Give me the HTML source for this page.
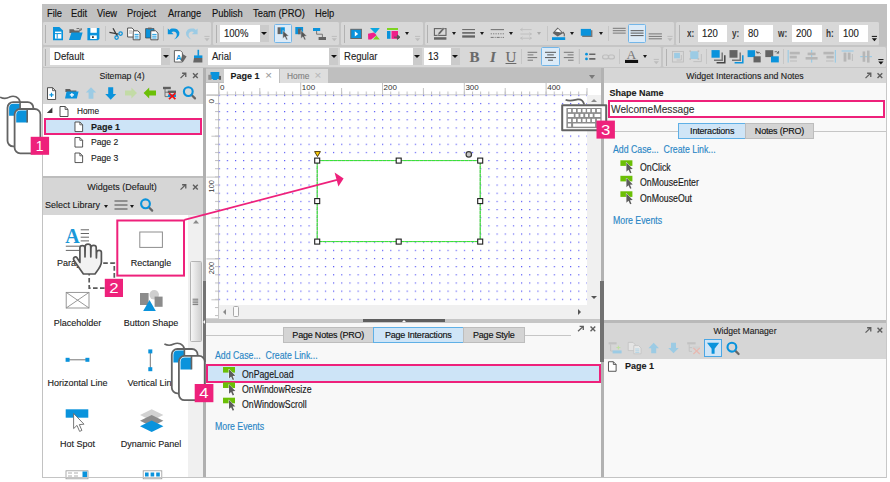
<!DOCTYPE html>
<html>
<head>
<meta charset="utf-8">
<title>Axure RP - Page 1</title>
<style>
html,body{margin:0;padding:0}
body{width:890px;height:482px;position:relative;overflow:hidden;background:#fff;font-family:"Liberation Sans",sans-serif;color:#1a1a1a}
.a{position:absolute}
.t{position:absolute;white-space:nowrap;line-height:1;font-size:9px;margin-top:0.5px;-webkit-text-stroke:0.12px}
.t.e{font-size:10px;margin-top:0.7px;transform:scaleX(0.875);transform-origin:0 50%;-webkit-text-stroke:0.15px}
.t[style*="text-align:center"]{transform-origin:50% 50%}
.m{position:absolute;white-space:nowrap;line-height:1;font-size:11px;top:7.6px;color:#111;transform:scaleX(0.85);transform-origin:0 50%;-webkit-text-stroke:0.15px}
.in{position:absolute;background:#fff;height:17px}
.in span{position:absolute;left:4.2px;top:3.4px;font-size:10.6px;line-height:1;color:#222;transform:scaleX(0.9);transform-origin:0 50%;-webkit-text-stroke:0.12px}
.dd{position:absolute;background:#cbcbcb;height:17px;width:9px}
.dd:after{content:"";position:absolute;left:1.5px;top:7px;border:3px solid transparent;border-top:3.4px solid #111;border-bottom:0}
.ar{position:absolute;width:0;height:0;border:2.8px solid transparent;border-top:3.2px solid #1a1a1a;border-bottom:0}
.sep{position:absolute;width:1px;background:#c6c6c6}
.grip{position:absolute;width:1.2px;height:18px;background:#b2b2b2}
.lnk{color:#2a86c6}
.hd{position:absolute;font-size:9px;margin-top:1px;-webkit-text-stroke:0.12px;line-height:1;color:#222;white-space:nowrap;text-align:center}
.tab{position:absolute;height:13.5px;top:327.4px;background:#d4d4d4;border:1px solid #bdbdbd;box-sizing:content-box;font-size:9px;letter-spacing:-0.2px;line-height:14px;text-align:center;color:#111;-webkit-text-stroke:0.15px;white-space:nowrap}
.tab.sel{background:#cfe5f7;border-color:#5fb0e6}
.badge{position:absolute;background:#e9257d;color:#fff;font-weight:bold;text-align:center}
svg{position:absolute;left:0;top:0;overflow:visible}
</style>
</head>
<body>
<svg width="0" height="0" style="position:absolute">
<defs>
<symbol id="pg" viewBox="0 0 9 11" overflow="visible"><path d="M0.5 0.5 H5.6 L8.5 3.4 V10.5 H0.5 Z" fill="#fff" stroke="#3c3c3c" stroke-width="0.9"/><path d="M5.6 0.5 V3.4 H8.5" fill="none" stroke="#3c3c3c" stroke-width="0.8"/></symbol>
<symbol id="ev" viewBox="0 0 13 13" overflow="visible"><rect x="0" y="0" width="12" height="5.6" fill="#6bbf06"/><path d="M6 2.2 L6 11.4 L8.1 9.5 L9.7 13 L11.1 12.4 L9.6 8.9 L12.4 8.7 Z" fill="#5c5c5c" stroke="#fff" stroke-width="0.8" paint-order="stroke"/></symbol>
<symbol id="pin" viewBox="0 0 8 8" overflow="visible"><path d="M0.6 7 L6.2 1.6 M2.4 1.4 H6.6 V5.6" fill="none" stroke="#5e5e5e" stroke-width="1.5"/></symbol>
<symbol id="cx" viewBox="0 0 8 8" overflow="visible"><path d="M0.6 1.4 L6 6.8 M6 1.4 L0.6 6.8" fill="none" stroke="#5e5e5e" stroke-width="1.6"/></symbol>
<symbol id="mag" viewBox="0 0 14 13" overflow="visible"><path d="M9 8.8 L12.4 12.2" stroke="#666" stroke-width="2.2" stroke-linecap="round"/><circle cx="5.7" cy="5.4" r="4.4" fill="none" stroke="#0a93dc" stroke-width="2.1"/></symbol>
</defs></svg>
<!-- window frame -->
<div class="a" id="win" style="left:42px;top:4px;width:844.5px;height:474px;background:#d6d6d6"></div>
<!-- menu bar -->
<div class="a" style="left:42px;top:4px;width:844.5px;height:18px;background:#c1c1c1"></div>
<div class="m" style="left:47px">File</div>
<div class="m" style="left:71px">Edit</div>
<div class="m" style="left:97px">View</div>
<div class="m" style="left:127px">Project</div>
<div class="m" style="left:167.5px">Arrange</div>
<div class="m" style="left:212px">Publish</div>
<div class="m" style="left:253px">Team (PRO)</div>
<div class="m" style="left:315px">Help</div>
<!-- toolbar row 1 -->

<div class="a" style="left:42px;top:21.7px;width:844.5px;height:46.6px;background:#c5c5c5"></div>
<div class="a" style="left:878.6px;top:21.7px;width:8px;height:24px;background:#c1c1c1"></div>
<div class="a" style="left:42.6px;top:21.8px;width:168.8px;height:23.2px;background:#d8d8d8;border-radius:1.5px"></div><div class="a" style="left:213.2px;top:21.8px;width:126.1px;height:23.2px;background:#d8d8d8;border-radius:1.5px"></div><div class="a" style="left:341.1px;top:21.8px;width:81.8px;height:23.2px;background:#d8d8d8;border-radius:1.5px"></div><div class="a" style="left:424.7px;top:21.8px;width:249.8px;height:23.2px;background:#d8d8d8;border-radius:1.5px"></div><div class="a" style="left:676.3px;top:21.8px;width:202.3px;height:23.2px;background:#d8d8d8;border-radius:1.5px"></div>
<div class="a" style="left:42.6px;top:46.6px;width:618.9px;height:20.9px;background:#d8d8d8;border-radius:1.5px"></div><div class="a" style="left:663.3px;top:46.6px;width:222.5px;height:20.9px;background:#d8d8d8;border-radius:1.5px"></div>
<div class="grip" style="left:45.3px;top:25px"></div><div class="grip" style="left:215.8px;top:25px"></div><div class="grip" style="left:343.6px;top:25px"></div><div class="grip" style="left:427.3px;top:25px"></div><div class="grip" style="left:678.9px;top:25px"></div><div class="grip" style="left:45.3px;top:48.6px;height:17px"></div><div class="grip" style="left:665.6px;top:48.6px;height:17px"></div>
<!-- TOOLBAR1 -->

<div class="sep" style="left:104.5px;top:26px;height:15px"></div>
<div class="sep" style="left:163px;top:26px;height:15px"></div>

<div class="in" style="left:220px;top:25px;width:39.5px"><span>100%</span></div>
<div class="dd" style="left:259.5px;top:25px"></div>
<div class="a" style="left:274px;top:24.3px;width:16.4px;height:16.4px;background:#dcebf8;border:1px solid #74b6e8;border-radius:1.5px;box-sizing:content-box"></div>

<div class="ar" style="left:404.5px;top:32px"></div>

<div class="ar" style="left:451.5px;top:32px"></div>
<div class="ar" style="left:480px;top:32px"></div>
<div class="ar" style="left:509px;top:32px"></div>
<div class="ar" style="left:537px;top:32px;border-top-color:#aaa"></div>
<div class="sep" style="left:546.5px;top:26px;height:15px"></div>
<div class="ar" style="left:570px;top:32px"></div>
<div class="ar" style="left:598.5px;top:32px"></div>
<div class="sep" style="left:607.5px;top:26px;height:15px"></div>
<div class="a" style="left:628.2px;top:24.3px;width:15.8px;height:16.4px;background:#dcebf8;border:1px solid #74b6e8;border-radius:1.5px;box-sizing:content-box"></div>

<div class="t" style="left:686.5px;top:28.6px;font-size:10px;font-weight:bold;color:#3a3a3a;transform:scaleX(0.82);transform-origin:0 50%;-webkit-text-stroke:0">x:</div>
<div class="in" style="left:697.6px;top:25px;width:29.7px"><span>120</span></div>
<div class="t" style="left:732px;top:28.6px;font-size:10px;font-weight:bold;color:#3a3a3a;transform:scaleX(0.82);transform-origin:0 50%;-webkit-text-stroke:0">y:</div>
<div class="in" style="left:743.6px;top:25px;width:29.6px"><span>80</span></div>
<div class="t" style="left:777.5px;top:28.6px;font-size:10px;font-weight:bold;color:#3a3a3a;transform:scaleX(0.82);transform-origin:0 50%;-webkit-text-stroke:0">w:</div>
<div class="in" style="left:792px;top:25px;width:29.5px"><span>200</span></div>
<div class="t" style="left:826px;top:28.6px;font-size:10px;font-weight:bold;color:#3a3a3a;transform:scaleX(0.82);transform-origin:0 50%;-webkit-text-stroke:0">h:</div>
<div class="in" style="left:838.6px;top:25px;width:29.5px"><span>100</span></div>
<svg width="890" height="482" viewBox="0 0 890 482">
<!-- new/open/save -->
<path d="M53 27 H59.4 L63 30.6 V40.2 H53 Z" fill="#0a93dc"/><path d="M55 31.6 H61.4 V38.6 H55 Z" fill="#fff"/><path d="M55 33.6 H61.4 M57.2 33.6 V38.6" stroke="#0a93dc" stroke-width="1"/>
<path d="M69.4 29.2 H73.6 L74.6 30.6 H79.6 V33 H69.4 Z" fill="#636363"/><path d="M76.5 28.6 Q79.5 27.6 80.6 30.2 M79.2 30.6 L81.4 30 L81 28" stroke="#636363" stroke-width="0.9" fill="none"/><path d="M71.4 32.6 H82.6 L80.4 40 H69 Z" fill="#0a93dc"/>
<path d="M87.4 28 H99.4 V39 L98 40.2 H87.4 Z" fill="#0a93dc"/><rect x="90.4" y="28" width="6.4" height="4.8" fill="#fff"/><rect x="90.2" y="35.4" width="6.6" height="3.6" fill="#fff"/><rect x="92" y="36.2" width="1.8" height="1.8" fill="#333"/>
<!-- cut/copy/paste -->
<path d="M109.4 32.4 L118.6 34.2 M113 28.2 L117.4 36.2" stroke="#3c3c3c" stroke-width="1.3" fill="none"/><circle cx="116.6" cy="37.6" r="1.7" fill="none" stroke="#0a93dc" stroke-width="1.2"/><circle cx="120.6" cy="33.6" r="1.7" fill="none" stroke="#0a93dc" stroke-width="1.2"/>
<path d="M127.6 28 H132 L134 30 V37 H127.6 Z" fill="#fff" stroke="#444" stroke-width="0.9"/><path d="M129 31 H132 M129 33 H132" stroke="#888" stroke-width="0.7"/>
<path d="M133.2 30.8 H137.8 L140 33 V39.8 H133.2 Z" fill="#fff" stroke="#444" stroke-width="0.9"/><path d="M134.6 34.4 H138.6 M134.6 36.2 H138.6 M134.6 38 H138.6" stroke="#0a93dc" stroke-width="0.9"/>
<path d="M145.6 28.6 H154 V38 H145.6 Z" fill="#0a93dc" stroke="#444" stroke-width="0.7"/><rect x="148" y="27.6" width="3.6" height="1.8" fill="#666"/>
<path d="M150.8 30.8 H155.6 L158 33.2 V39.8 H150.8 Z" fill="#fff" stroke="#444" stroke-width="0.9"/><path d="M152.2 34.4 H156.6 M152.2 36.2 H156.6 M152.2 38 H156.6" stroke="#0a93dc" stroke-width="0.9"/>
<!-- undo/redo -->
<path d="M167.8 28.4 V34.2 H173.6 L171.4 32 Q175.2 30.4 176.6 33.6 Q177.6 36.8 174 39.4 Q179.8 37.4 179.4 32.6 Q178 27.4 171.6 28.6 Q170.4 29 169.6 30 Z" fill="#0a93dc"/>
<path d="M197.6 28.4 V34.2 H191.8 L194 32 Q190.2 30.4 188.8 33.6 Q187.8 36.8 191.4 39.4 Q185.6 37.4 186 32.6 Q187.4 27.4 193.8 28.6 Q195 29 195.8 30 Z" fill="#9ccbe4"/>
<path d="M204.4 36.4 H209.6" stroke="#bdbdbd" stroke-width="1"/><path d="M204.4 38.2 H209.6 L207 41.2 Z" fill="#bdbdbd"/>
<!-- select tools -->
<rect x="277.6" y="27.3" width="3.2" height="6.8" fill="#636363"/><rect x="280.8" y="27.3" width="4" height="6.8" fill="#0a93dc"/>
<path d="M282.8 30.4 V38.6 L284.8 36.8 L286.4 40 L287.8 39.4 L286.3 36.2 L288.8 36 Z" fill="#555" stroke="#e8eef4" stroke-width="0.5"/>
<rect x="295.3" y="27" width="7.8" height="7.2" fill="#0a93dc"/><rect x="298" y="28.6" width="3.2" height="5.6" fill="#636363"/>
<path d="M300.9 30.4 V38.6 L302.9 36.8 L304.5 40 L305.9 39.4 L304.4 36.2 L306.9 36 Z" fill="#555" stroke="#d9d9d9" stroke-width="0.5"/>
<rect x="313" y="28" width="7.2" height="3" fill="#0a93dc"/><path d="M316.6 31 V34.2 H322.4 V37" stroke="#777" stroke-width="1" fill="none"/><rect x="318.6" y="37" width="7.4" height="3" fill="#636363"/>
<path d="M331.7 36.4 H336.90000000000003" stroke="#bdbdbd" stroke-width="1"/><path d="M331.7 38.2 H336.90000000000003 L334.3 41.2 Z" fill="#bdbdbd"/>
<!-- preview / publish -->
<rect x="350.8" y="29.3" width="10.6" height="9.2" fill="#0a93dc" stroke="#666" stroke-width="1"/><path d="M354.8 31.2 V36.6 L358.2 33.9 Z" fill="#fff"/>
<path d="M370 28 H379.8 L375.4 33.6 Z" fill="#0aa6e0"/><path d="M368 33.8 L374 32.6 L376.6 35.2 L371.2 39.4 H368.2 Z" fill="#f01f8a"/><path d="M376.4 35.6 L379.9 39.5 H373 Z" fill="#7ed321"/>
<rect x="387" y="28" width="11" height="2" fill="#7ed321"/><rect x="387" y="31" width="3.5" height="7.8" fill="#0a93dc"/><rect x="391.5" y="31" width="6.5" height="7.8" fill="#f01f8a"/><path d="M394 37.2 H398 M397.4 35 L400 37.2 L397.4 39.4 Z" stroke="#555" stroke-width="1" fill="#555"/>
<path d="M415.0 36.4 H420.20000000000005" stroke="#bdbdbd" stroke-width="1"/><path d="M415.0 38.2 H420.20000000000005 L417.6 41.2 Z" fill="#bdbdbd"/>
<!-- line color/width/style -->
<rect x="434.4" y="28.6" width="11.6" height="6.8" fill="none" stroke="#636363" stroke-width="1.1"/><path d="M437.4 35.4 L438.4 32.8 L443 27.4 L444.6 28.8 L440 34.2 Z" fill="#636363" stroke="#d9d9d9" stroke-width="0.5"/><rect x="434" y="37.2" width="12.4" height="2.5" fill="#636363"/>
<path d="M462.2 29.6 H475" stroke="#636363" stroke-width="1"/><path d="M462.2 32.9 H475" stroke="#636363" stroke-width="1.6"/><path d="M462.2 36.5 H475" stroke="#636363" stroke-width="2.3"/>
<path d="M490.7 29.6 H504" stroke="#777" stroke-width="1.1"/><path d="M490.7 33.8 H504" stroke="#777" stroke-width="1" stroke-dasharray="1.2 1.2"/><path d="M490.7 37.4 H504" stroke="#777" stroke-width="1" stroke-dasharray="3 1 1 1"/>
<g stroke="#bdbdbd" stroke-width="0.9" fill="none"><path d="M520.4 29.6 H531.6 M522.6 28.2 L520.6 29.6 L522.6 31 M520.4 34 H531.6 M529.4 32.6 L531.4 34 L529.4 35.4 M520.4 38.2 H531.6 M522.6 36.8 L520.6 38.2 L522.6 39.6 M529.4 36.8 L531.4 38.2 L529.4 39.6"/></g>
<!-- fill -->
<path d="M557.6 27.4 L563.4 33 L557.6 36.4 L552.6 33 Z" fill="#636363"/><path d="M555 31.6 L558 28.8 L561.6 32.4 Z" fill="#fff"/><path d="M563 32 Q565 34 564.2 36.4" stroke="#636363" stroke-width="1.1" fill="none"/><rect x="552" y="37.2" width="13.2" height="2.8" fill="#0a93dc"/>
<rect x="582.2" y="30.2" width="10.2" height="6.8" fill="#777"/><rect x="580.8" y="28.9" width="10.2" height="6.8" fill="#0a93dc"/>
<!-- valign -->
<path d="M612.8 28.3 H625.7 M612.8 30.7 H625.7 M612.8 33.1 H625.7" stroke="#777" stroke-width="1"/>
<path d="M630.6 30.7 H643.6 M630.6 33.1 H643.6 M630.6 35.6 H643.6" stroke="#555" stroke-width="1"/>
<path d="M648.7 33.9 H661.9 M648.7 36.4 H661.9 M648.7 38.8 H661.9" stroke="#777" stroke-width="1"/>
<path d="M667.4 36.4 H672.6" stroke="#bdbdbd" stroke-width="1"/><path d="M667.4 38.2 H672.6 L670 41.2 Z" fill="#bdbdbd"/>
<path d="M871.8 36.4 H877.0" stroke="#111" stroke-width="1"/><path d="M871.8 38.2 H877.0 L874.4 41.2 Z" fill="#111"/>
</svg>
<!-- TOOLBAR2 -->

<div class="in" style="left:49.7px;top:48px;width:111.5px"><span>Default</span></div>
<div class="dd" style="left:161.2px;top:48px"></div>
<div class="in" style="left:208px;top:48px;width:121px"><span>Arial</span></div>
<div class="dd" style="left:329px;top:48px"></div>
<div class="in" style="left:340px;top:48px;width:72.5px"><span>Regular</span></div>
<div class="dd" style="left:412.5px;top:48px"></div>
<div class="in" style="left:424.2px;top:48px;width:26.5px"><span>13</span></div>
<div class="dd" style="left:450.7px;top:48px"></div>
<div class="t" style="left:469.5px;top:49px;font-family:'Liberation Serif',serif;font-weight:bold;font-size:15px;color:#6a6a6a">B</div>
<div class="t" style="left:490px;top:49px;font-family:'Liberation Serif',serif;font-style:italic;font-weight:bold;font-size:15px;color:#6a6a6a">I</div>
<div class="t" style="left:505.5px;top:49px;font-family:'Liberation Serif',serif;font-size:15px;color:#6a6a6a;text-decoration:underline">U</div>
<div class="sep" style="left:521px;top:49px;height:15px"></div>
<div class="a" style="left:541.4px;top:47.2px;width:16.4px;height:16.4px;background:#dcebf8;border:1px solid #74b6e8;border-radius:1.5px;box-sizing:content-box"></div>
<div class="sep" style="left:619.4px;top:49px;height:15px"></div>
<div class="ar" style="left:643px;top:54.5px"></div>

<div class="sep" style="left:706.4px;top:49px;height:15px"></div>
<div class="sep" style="left:783px;top:49px;height:15px"></div>
<svg width="890" height="482" viewBox="0 0 890 482">
<!-- style painter icons -->
<path d="M174.4 50.6 H180.4 L182.4 52.6 V62 H174.4 Z" fill="#fff" stroke="#555" stroke-width="0.9"/><text x="176" y="60.4" font-family="Liberation Sans, sans-serif" font-size="7.5" font-weight="bold" fill="#0a93dc">A</text><path d="M182.6 54 L186.6 56.6 L183 62 L180.6 60.4 Z" fill="#666"/>
<rect x="197.5" y="49.8" width="1.6" height="6" fill="#0a93dc"/><rect x="194" y="55.4" width="8.4" height="2.6" fill="#0a93dc"/><path d="M194 58 H202.4 V62.4 H193.2 Z" fill="#666"/>
<!-- align -->
<path d="M527.6 52.3 H537.2 M527.6 54.9 H533.4 M527.6 57.6 H537.2 M527.6 60.2 H533" stroke="#777" stroke-width="1"/>
<path d="M545 52.3 H556 M547.2 54.9 H553.8 M545 57.6 H556 M548 60.2 H553" stroke="#555" stroke-width="1"/>
<path d="M563.8 52.3 H573.6 M567.6 54.9 H573.6 M563.8 57.6 H573.6 M568 60.2 H573.6" stroke="#777" stroke-width="1"/>
<path d="M579.3 49 V64" stroke="#bcbcbc" stroke-width="1"/>
<circle cx="586.5" cy="54.2" r="1.4" fill="#0a93dc"/><circle cx="586.5" cy="58.9" r="1.4" fill="#0a93dc"/><path d="M589.2 54.2 H595.4 M589.2 58.9 H595.4" stroke="#666" stroke-width="1.6"/>
<rect x="602.6" y="55" width="6" height="3.8" rx="1.9" fill="none" stroke="#bdbdbd" stroke-width="1.2"/><rect x="608.4" y="55" width="6" height="3.8" rx="1.9" fill="none" stroke="#bdbdbd" stroke-width="1.2"/>
<text x="626.6" y="58.9" font-family="Liberation Serif, serif" font-size="13.5" fill="#777">A</text><rect x="625" y="59.9" width="13.1" height="3.1" fill="#111"/>
<path d="M653.6999999999999 59.4 H658.9" stroke="#bdbdbd" stroke-width="1"/><path d="M653.6999999999999 61.2 H658.9 L656.3 64.2 Z" fill="#bdbdbd"/>
<!-- group/ungroup -->
<rect x="672.4" y="51.4" width="11" height="10.6" fill="none" stroke="#bdbdbd" stroke-width="0.9"/><rect x="674.1" y="52.9" width="5.8" height="5.4" fill="#9ccbe4"/><path d="M681.4 55 V60 H676.6" stroke="#bdbdbd" stroke-width="0.9" fill="none"/>
<rect x="690.2" y="51.2" width="8.2" height="7.8" fill="#9ccbe4"/><g fill="#bdbdbd"><rect x="689.4" y="50.4" width="1.6" height="1.6"/><rect x="697.6" y="50.4" width="1.6" height="1.6"/><rect x="689.4" y="58.2" width="1.6" height="1.6"/><rect x="697.6" y="58.2" width="1.6" height="1.6"/></g><path d="M701.4 54 V61.6 H693.4" stroke="#bdbdbd" stroke-width="0.9" fill="none"/>
<!-- order -->
<path d="M714 60.2 H722.2 V52.6" stroke="#777" stroke-width="1.5" fill="none"/><path d="M716.6 62.8 H724.8 V55.2" stroke="#444" stroke-width="1.5" fill="none"/><rect x="711.5" y="50.1" width="8.2" height="7.6" fill="#0a93dc"/>
<path d="M732 60.2 H740.2 V52.6" stroke="#777" stroke-width="1.5" fill="none"/><path d="M734.6 62.8 H742.8 V55.2" stroke="#0a93dc" stroke-width="1.5" fill="none"/><rect x="729.5" y="50.1" width="8" height="7.6" fill="#636363"/>
<rect x="747.6" y="50.2" width="7.5" height="6.9" fill="#0a93dc"/><rect x="753.5" y="56.3" width="7.2" height="6.1" fill="#636363"/><path d="M757 52.6 Q759.4 51.4 760.6 53.6 M756.8 51 V53 H758.8" stroke="#555" stroke-width="0.8" fill="none"/>
<rect x="765.3" y="50.2" width="7.9" height="6.9" fill="#636363"/><rect x="771" y="56.3" width="7.8" height="6.1" fill="#0a93dc"/><path d="M774.6 51.8 Q777 50.8 778.2 53 M778.6 51 V53.2 H776.6" stroke="#555" stroke-width="0.8" fill="none"/>
<!-- align objects (disabled) -->
<rect x="787.6" y="50" width="1.2" height="12.6" fill="#9ccbe4"/><rect x="789.8" y="51.8" width="10" height="2.6" fill="#b6b6b6"/><rect x="789.8" y="55.8" width="7" height="2.6" fill="#b6b6b6"/><path d="M790 61 H797" stroke="#b6b6b6" stroke-width="0.8"/>
<rect x="811" y="50" width="1.2" height="12.6" fill="#9ccbe4"/><rect x="807.6" y="52.6" width="8" height="2.6" fill="#b6b6b6"/><rect x="805.6" y="57" width="12" height="2.6" fill="#b6b6b6"/>
<rect x="834.8" y="50" width="1.2" height="12.6" fill="#9ccbe4"/><rect x="823.4" y="51.8" width="10.4" height="2.6" fill="#b6b6b6"/><rect x="826.4" y="55.8" width="7.4" height="2.6" fill="#b6b6b6"/><path d="M826 61 H833.6" stroke="#b6b6b6" stroke-width="0.8"/>
<rect x="841.6" y="50.4" width="12" height="1.2" fill="#9ccbe4"/><rect x="843.6" y="52.6" width="2.8" height="9" fill="#b6b6b6"/><rect x="847.8" y="52.6" width="2.8" height="7" fill="#b6b6b6"/><path d="M852.4 54 V61" stroke="#b6b6b6" stroke-width="0.8"/>
<rect x="860.2" y="56" width="11.8" height="1.2" fill="#9ccbe4"/><rect x="862.6" y="51.4" width="2.6" height="10.4" fill="#b6b6b6"/><rect x="867" y="50.6" width="2.6" height="12" fill="#b6b6b6"/>
<path d="M878.3 59.599999999999994 H883.5" stroke="#111" stroke-width="1"/><path d="M878.3 61.4 H883.5 L880.9 64.39999999999999 Z" fill="#111"/>
</svg>
<!-- LEFT -->
<!-- sitemap -->
<div class="hd" style="left:42px;width:160px;top:70.5px;transform:scaleX(0.97)">Sitemap (4)</div>
<div class="a" style="left:43px;top:104px;width:160px;height:71.5px;background:#fff"></div>
<div class="a" style="left:42px;top:175.5px;width:161px;height:2.5px;background:#bdbdbd"></div>
<div class="a" style="left:43.5px;top:118px;width:154.5px;height:13px;background:#cde4f7;border:2px solid #ee217b"></div>
<div class="t" style="left:76.8px;top:106.5px;transform:scaleX(0.92);transform-origin:0 50%">Home</div>
<div class="t" style="left:91px;top:122px;font-weight:bold">Page 1</div>
<div class="t" style="left:91.4px;top:137.5px;transform:scaleX(0.96);transform-origin:0 50%">Page 2</div>
<div class="t" style="left:91.4px;top:153px;transform:scaleX(0.96);transform-origin:0 50%">Page 3</div>
<!-- widgets -->
<div class="hd" style="left:42px;width:160px;top:182px">Widgets (Default)</div>
<div class="t" style="left:45px;top:200px">Select Library</div>
<div class="ar" style="left:103.5px;top:204.5px"></div>
<div class="ar" style="left:130px;top:204.5px"></div>
<div class="a" style="left:43px;top:215px;width:144.5px;height:263px;background:#fff"></div>
<div class="a" style="left:187.5px;top:215px;width:15.5px;height:263px;background:#f0f0f0"></div>
<div class="a" style="left:190.4px;top:261px;width:11.4px;height:81px;background:linear-gradient(to right,#f6f6f6,#cfcfcf);border:1px solid #b4b4b4;border-radius:1.5px;box-sizing:border-box"></div>
<div class="t" style="left:57px;top:258px">Paragraph</div>
<div class="t" style="left:101px;top:258px;width:100px;text-align:center">Rectangle</div>
<div class="t" style="left:27.5px;top:318.2px;width:100px;text-align:center">Placeholder</div>
<div class="t" style="left:101px;top:318.2px;width:100px;text-align:center">Button Shape</div>
<div class="t" style="left:27.5px;top:378.5px;width:100px;text-align:center">Horizontal Line</div>
<div class="t" style="left:127.5px;top:378.5px">Vertical Line</div>
<div class="t" style="left:27.5px;top:439px;width:100px;text-align:center">Hot Spot</div>
<div class="t" style="left:101px;top:439px;width:100px;text-align:center">Dynamic Panel</div>
<svg width="890" height="482" viewBox="0 0 890 482">
<!-- sitemap header icons -->
<use href="#pin" x="180" y="72" width="7" height="7"/><use href="#cx" x="192.5" y="72" width="7" height="7"/>
<!-- sitemap toolbar -->
<path d="M47.5 87.7 H52.6 L55.6 90.7 V99.5 H47.5 Z" fill="#fff" stroke="#3c3c3c" stroke-width="0.9"/><path d="M52.6 87.7 V90.7 H55.6" fill="none" stroke="#3c3c3c" stroke-width="0.8"/>
<path d="M49.4 94.8 H53.6 M51.5 92.7 V96.9" stroke="#0a93dc" stroke-width="1.2"/>
<path d="M65.4 89 H70 L71 90.4 H76.4 V92 H65.4 Z" fill="#5f5f5f"/><path d="M66.6 91.4 H78.6 L76.8 98.4 H65 Z" fill="#0a93dc"/><path d="M69.8 94.9 H74 M71.9 92.9 V96.9" stroke="#fff" stroke-width="1.2"/>
<path d="M91 87.2 L96.2 92.6 H93.4 V98.8 H88.6 V92.6 H85.8 Z" fill="#9ccbe4"/>
<path d="M110.7 99.8 L105.2 94 H108.2 V87.2 H113.2 V94 H116.2 Z" fill="#0a93dc"/>
<path d="M137 93 L131.4 87.6 V90.6 H125 V95.4 H131.4 V98.4 Z" fill="#c3dba6"/>
<path d="M143.6 93 L149.2 87.6 V90.6 H156 V95.4 H149.2 V98.4 Z" fill="#6bbf06"/>
<rect x="163" y="86.8" width="7.8" height="2.4" fill="#5f5f5f"/><path d="M165 89 V96.6 H168.4 M165 92.2 H168" stroke="#6a6a6a" stroke-width="0.9" fill="none"/><rect x="167.8" y="90.6" width="8.2" height="2.4" fill="#5f5f5f"/><rect x="168" y="94.4" width="8" height="2.6" fill="#0a93dc"/>
<path d="M169 93.2 L175.4 99.2 M175.4 93.2 L169 99.2" stroke="#ee1111" stroke-width="1.7"/>
<use href="#mag" x="182.6" y="86.2" width="14" height="13"/>
<!-- tree -->
<path d="M52.4 107.4 V113 H46.8 Z" fill="#3a3a3a"/>
<use href="#pg" x="59.5" y="106" width="9" height="11"/>
<use href="#pg" x="74.5" y="121.5" width="8.6" height="10.6"/>
<use href="#pg" x="74.5" y="137" width="8.6" height="10.6"/>
<use href="#pg" x="74.5" y="152.5" width="8.6" height="10.6"/>
<!-- widgets header -->
<use href="#pin" x="180" y="183.5" width="7" height="7"/><use href="#cx" x="192.5" y="183.5" width="7" height="7"/>
<path d="M114.5 201 H127.5 M114.5 205 H127.5 M114.5 209 H127.5" stroke="#4a4a4a" stroke-width="1.2"/>
<use href="#mag" x="139.8" y="198.4" width="14" height="13"/>
<!-- widget icons -->
<text x="65.3" y="242.6" font-family="Liberation Serif, serif" font-weight="bold" font-size="20" fill="#1a98d8">A</text>
<path d="M80.7 229.8 H89 M80.7 233.5 H89 M80.7 237.2 H89 M80.7 240.9 H89 M65.8 246.2 H89 M65.8 250.4 H89" stroke="#666" stroke-width="1"/>
<rect x="139.8" y="232" width="22.6" height="15.4" fill="#fff" stroke="#8d8d8d" stroke-width="1"/>
<g stroke="#8d8d8d" stroke-width="0.9" fill="#fff"><rect x="66.2" y="292.4" width="22.8" height="15.6"/><path d="M66.2 292.4 L89 308 M89 292.4 L66.2 308"/></g>
<rect x="140" y="293" width="8.6" height="12" fill="#8c8c8c"/><circle cx="154.2" cy="294.8" r="4.8" fill="#cfcfcf"/><rect x="154.6" y="296.6" width="8" height="10.2" fill="#8c8c8c"/><path d="M149.5 300 L155.8 311 H143.2 Z" fill="#0a93dc"/>
<path d="M67.5 359.8 H87.5" stroke="#777" stroke-width="1"/><rect x="65.6" y="357.8" width="4" height="4" fill="#0a93dc"/><rect x="85.4" y="357.8" width="4" height="4" fill="#0a93dc"/>
<path d="M150.3 351 V369" stroke="#777" stroke-width="1"/><rect x="148.3" y="349.4" width="4" height="4" fill="#0a93dc"/><rect x="148.3" y="367.2" width="4" height="4" fill="#0a93dc"/>
<rect x="65.7" y="409.3" width="22.6" height="8.4" fill="#0a93dc"/><path d="M73.6 413.4 V428.6 L77 425.4 L79.6 431.4 L81.9 430.4 L79.3 424.6 L84 424.2 Z" fill="#fff" stroke="#6a6a6a" stroke-width="0.9"/>
<path d="M151.7 409.3 L163.4 415 L151.7 420.7 L140 415 Z" fill="#d2d2d2"/><path d="M151.7 415 L163.4 420.7 L151.7 426.4 L140 420.7 Z" fill="#8c8c8c"/><path d="M151.7 420.6 L163.4 426.3 L151.7 432 L140 426.3 Z" fill="#0a93dc"/>
<g stroke="#999" stroke-width="0.8" fill="none"><rect x="66" y="470.8" width="22" height="8"/><path d="M68 473 H72 M74 473 H78 M68 476 H72 M74 476 H78"/></g><rect x="82.5" y="471.5" width="4.6" height="6.5" fill="#0a93dc"/>
<g stroke="#999" stroke-width="0.8" fill="none"><rect x="143.2" y="470.8" width="18.6" height="8"/></g><rect x="145" y="472.5" width="3.6" height="4" fill="#0a93dc"/><rect x="150.6" y="472.5" width="3.6" height="4" fill="#0a93dc"/><rect x="156.2" y="472.5" width="3.6" height="4" fill="#0a93dc"/>
<!-- scrollbar bits -->
<path d="M193 223.4 L196 220 L199 223.4 Z" fill="#8a8a8a"/>
<path d="M192.6 299.2 H198.2 M192.6 301 H198.2 M192.6 302.8 H198.2 M192.6 304.6 H198.2" stroke="#5a5a5a" stroke-width="0.8"/>
</svg>
<!-- vertical splitter -->
<div class="a" style="left:202.8px;top:68px;width:3.5px;height:410px;background:#b0b0b0"></div>
<div class="a" style="left:202.6px;top:280.8px;width:3.5px;height:80.8px;background:#747474"></div>
<div class="a" style="left:203.4px;top:319.8px;width:0;height:0;border:2.2px solid transparent;border-right:2.6px solid #fff;border-left:0"></div>
<!-- CENTER -->
<div class="a" style="left:206.4px;top:68px;width:394.2px;height:14.5px;background:#bfbfbf"></div>
<div class="a" style="left:206.4px;top:68.8px;width:17.2px;height:13.4px;background:#cdcdcd"></div>
<svg width="890" height="482" viewBox="0 0 890 482"><rect x="210.5" y="72" width="8.8" height="7" fill="#0a93dc"/><path d="M212.6 80 H217.4 L216.4 78.6 H213.6 Z" fill="#0a93dc"/><rect x="208.3" y="74.8" width="3.2" height="5" fill="#8c8c8c"/><rect x="218.8" y="75.9" width="2.2" height="3.9" fill="#5f5f5f"/></svg>
<div class="a" style="left:223.6px;top:68.6px;width:55.6px;height:14px;background:#fff"></div>
<div class="a" style="left:279.6px;top:69.4px;width:48.6px;height:13.2px;background:#dedede"></div>
<div class="t" style="left:230.5px;top:71px;font-weight:bold">Page 1</div>
<div class="t" style="left:286.5px;top:71.3px;color:#808080;transform:scaleX(0.93);transform-origin:0 50%">Home</div>
<div class="t" style="left:265.2px;top:69.4px;color:#9a9a9a;font-size:11.5px">×</div>
<div class="t" style="left:314.6px;top:69.4px;color:#b8b8b8;font-size:11.5px">×</div>
<div class="a" style="left:589px;top:74.5px;width:0;height:0;border:3.2px solid transparent;border-top:4px solid #7a7a7a;border-bottom:0"></div>
<!-- canvas -->
<div class="a" style="left:206.4px;top:82.5px;width:394.2px;height:235.5px;background:#fff"></div>
<svg width="890" height="482" viewBox="0 0 890 482">
<defs>
<pattern id="grid" x="218.6" y="94.75" width="8.174" height="8.16" patternUnits="userSpaceOnUse"><rect x="0" y="0" width="1.15" height="1.15" fill="#5050f5"/></pattern>
<pattern id="tk" x="218.6" y="0" width="8.174" height="4" patternUnits="userSpaceOnUse"><rect x="0" y="0" width="1" height="4" fill="#c0c0c0"/></pattern>
<pattern id="tkv" x="0" y="94.8" width="4" height="8.16" patternUnits="userSpaceOnUse"><rect x="0" y="0" width="4" height="1" fill="#c0c0c0"/></pattern>
</defs>
<rect x="218.7" y="91.5" width="368.6" height="3.5" fill="url(#tk)"/>
<rect x="215" y="95" width="3.5" height="222" fill="url(#tkv)"/>
<rect x="206.4" y="94.3" width="381" height="1" fill="#cacaca"/>
<rect x="218.1" y="82.5" width="1" height="236" fill="#c2c2c2"/>
<g fill="#c4c4c4">
<rect x="218.4" y="82.5" width="1" height="12.5"/><rect x="300.2" y="82.5" width="1" height="12.5"/><rect x="382" y="82.5" width="1" height="12.5"/><rect x="463.8" y="82.5" width="1" height="12.5"/><rect x="545.6" y="82.5" width="1" height="12.5"/>
<rect x="259.3" y="88" width="1" height="7"/><rect x="341.1" y="88" width="1" height="7"/><rect x="422.9" y="88" width="1" height="7"/><rect x="504.7" y="88" width="1" height="7"/><rect x="586.5" y="88" width="1" height="7"/>
<rect x="206.4" y="94.8" width="12" height="1"/><rect x="206.4" y="176.6" width="12" height="1"/><rect x="206.4" y="258.4" width="12" height="1"/>
<rect x="211.4" y="135.7" width="7" height="1"/><rect x="211.4" y="217.5" width="7" height="1"/><rect x="211.4" y="299.3" width="7" height="1"/>
</g>
<rect x="218.4" y="94.6" width="368.6" height="209" fill="url(#grid)"/>
<g font-family="Liberation Sans, sans-serif" font-size="8" fill="#333">
<text x="220" y="90">0</text><text x="301.8" y="90">100</text><text x="383.6" y="90">200</text><text x="465.4" y="90">300</text><text x="547.2" y="90">400</text>
<text transform="translate(214.2,103.6) rotate(-90)">0</text>
<text transform="translate(214.2,192.4) rotate(-90)" font-size="7.4">100</text>
<text transform="translate(214.2,274.2) rotate(-90)" font-size="7.4">200</text>
</g>
<!-- selected rectangle -->
<rect x="317.2" y="160.6" width="163.0" height="81" fill="#fff" stroke="#8a9a8a" stroke-width="0.9"/>
<rect x="317.2" y="160.6" width="163.0" height="81" fill="none" stroke="#2bee2b" stroke-width="1" stroke-dasharray="3.4 0.7"/>
<g fill="#fff" stroke="#1e1e1e" stroke-width="1.1">
<rect x="314.7" y="158.1" width="5.0" height="5.0"/><rect x="396.2" y="158.1" width="5.0" height="5.0"/><rect x="477.7" y="158.1" width="5.0" height="5.0"/><rect x="314.7" y="198.6" width="5.0" height="5.0"/><rect x="477.7" y="198.6" width="5.0" height="5.0"/><rect x="314.7" y="239.1" width="5.0" height="5.0"/><rect x="396.2" y="239.1" width="5.0" height="5.0"/><rect x="477.7" y="239.1" width="5.0" height="5.0"/>
</g>
<path d="M314.6 151.6 L320.4 151.6 L317.5 156.6 Z" fill="#ffcf0a" stroke="#3a2a00" stroke-width="0.9" stroke-linejoin="round"/>
<circle cx="468.8" cy="154.4" r="2.7" fill="#c6c6c6" stroke="#3a3a3a" stroke-width="1.2"/>
</svg>
<!-- scrollbars -->
<div class="a" style="left:587.3px;top:95.2px;width:13.3px;height:210px;background:#f0f0f0"></div>
<div class="a" style="left:218.6px;top:305px;width:382px;height:14.2px;background:#f0f0f0"></div>
<div class="a" style="left:590.5px;top:98.5px;width:0;height:0;border:3px solid transparent;border-bottom:3.5px solid #8a8a8a;border-top:0"></div>
<div class="a" style="left:590.5px;top:295.5px;width:0;height:0;border:3px solid transparent;border-top:3.5px solid #555;border-bottom:0"></div>
<div class="a" style="left:222.5px;top:308.8px;width:0;height:0;border:3px solid transparent;border-right:3.5px solid #8a8a8a;border-left:0"></div>
<div class="a" style="left:577.5px;top:308.8px;width:0;height:0;border:3px solid transparent;border-left:3.5px solid #555;border-right:0"></div>
<div class="a" style="left:233px;top:306.3px;width:6px;height:11px;background:#fafafa;border:1px solid #a9a9a9;border-radius:1.5px;box-sizing:border-box"></div>
<!-- horizontal splitter -->
<div class="a" style="left:206.4px;top:318.8px;width:394.2px;height:3.8px;background:#c6c6c6"></div>
<div class="a" style="left:363px;top:319.4px;width:82px;height:3px;background:#5e5e5e"></div>
<div class="a" style="left:402.4px;top:320.2px;width:0;height:0;border:2.2px solid transparent;border-bottom:2.4px solid #fff;border-top:0"></div>
<div class="a" style="left:600.4px;top:320.4px;width:0;height:0;border:2.2px solid transparent;border-left:2.6px solid #fff;border-right:0"></div>
<!-- BOTTOM -->
<div class="a" style="left:206.4px;top:322.6px;width:394.2px;height:155.4px;background:#f8f8f8"></div>
<div class="a" style="left:206.4px;top:334.6px;width:364.6px;height:1px;background:#c6c6c6"></div>
<div class="tab" style="left:282.5px;width:89.5px">Page Notes (PRO)</div>
<div class="tab sel" style="left:373px;width:88.5px">Page Interactions</div>
<div class="tab" style="left:462.5px;width:60.5px">Page Style</div>
<div class="t e lnk" style="left:215px;top:350.5px">Add Case...&nbsp; Create Link...</div>
<div class="a" style="left:206.2px;top:364px;width:390.4px;height:15px;background:#cde4f7;border:2px solid #ee217b"></div>
<div class="t e" style="left:241.5px;top:369px">OnPageLoad</div>
<div class="t e" style="left:241.5px;top:384.2px">OnWindowResize</div>
<div class="t e" style="left:241.5px;top:399.5px">OnWindowScroll</div>
<div class="t e lnk" style="left:215px;top:421.5px">More Events</div>
<!-- RIGHT -->
<div class="a" style="left:600.6px;top:68px;width:3.8px;height:410px;background:#b2b2b2"></div>
<div class="a" style="left:600.2px;top:281px;width:3.6px;height:80.5px;background:#727272"></div>
<div class="hd" style="left:604.4px;width:282px;top:70.5px;transform:scaleX(0.975)">Widget Interactions and Notes</div>
<div class="a" style="left:604.4px;top:83px;width:282px;height:237px;background:#f9f9f9"></div>
<div class="t" style="left:609.5px;top:88.2px;font-weight:bold">Shape Name</div>
<div class="a" style="left:607.8px;top:100.3px;width:273px;height:14px;background:#fff;border:2px solid #ee217b"></div>
<div class="t" style="left:611px;top:103.2px;font-size:10.6px;color:#333;transform:scaleX(0.96);transform-origin:0 50%">WelcomeMessage</div>
<div class="a" style="left:604.4px;top:130.6px;width:281.2px;height:1px;background:#c6c6c6"></div>
<div class="tab sel" style="left:678.4px;top:123px;width:65.5px">Interactions</div>
<div class="tab" style="left:745px;top:123px;width:67px">Notes (PRO)</div>
<div class="t e lnk" style="left:613px;top:144px">Add Case...&nbsp; Create Link...</div>
<div class="t e" style="left:640px;top:162px">OnClick</div>
<div class="t e" style="left:640px;top:177.5px">OnMouseEnter</div>
<div class="t e" style="left:640px;top:193px">OnMouseOut</div>
<div class="t e lnk" style="left:613px;top:215.2px">More Events</div>
<div class="a" style="left:604.4px;top:320px;width:282px;height:3.4px;background:#b9b9b9"></div>
<div class="hd" style="left:604.4px;width:282px;top:325.5px;transform:scaleX(0.955)">Widget Manager</div>
<div class="a" style="left:704px;top:339px;width:16.2px;height:16.2px;background:#cfe5f7;border:1px solid #4aa6e4"></div>
<div class="a" style="left:604.4px;top:358.5px;width:282px;height:119px;background:#f9f9f9"></div>
<div class="t" style="left:625px;top:361px;font-weight:bold">Page 1</div>
<svg width="890" height="482" viewBox="0 0 890 482">
<use href="#pin" x="865" y="72" width="7" height="7"/><use href="#cx" x="877" y="72" width="7" height="7"/>
<use href="#ev" x="620.4" y="160.3" width="13" height="13"/>
<use href="#ev" x="620.4" y="175.8" width="13" height="13"/>
<use href="#ev" x="620.4" y="191.3" width="13" height="13"/>
<use href="#pin" x="865" y="326.5" width="7" height="7"/><use href="#cx" x="877" y="326.5" width="7" height="7"/>
<!-- widget manager toolbar -->
<rect x="608.6" y="342.2" width="8" height="2.2" fill="#c2c2c2"/><path d="M610.6 344.4 V351 H613" stroke="#c2c2c2" stroke-width="0.9" fill="none"/><rect x="612.6" y="350.4" width="9" height="3" fill="#9ccbe4"/><path d="M616.4 347.6 H620.4 M618.4 345.6 V349.6" stroke="#bfe0a0" stroke-width="1"/>
<path d="M628.2 342.4 H633 L635 344.4 V350.6 H628.2 Z" fill="#e4e4e4" stroke="#c2c2c2" stroke-width="0.8"/><path d="M633.8 345.6 H638.6 L641 348 V353.8 H633.8 Z" fill="#e8e8e8" stroke="#c2c2c2" stroke-width="0.8"/><path d="M635.2 349 H639.4 M635.2 350.8 H639.4 M635.2 352.4 H639.4" stroke="#9ccbe4" stroke-width="0.7"/>
<path d="M653.7 342.8 L659 348.2 H656.2 V353.3 H651.2 V348.2 H648.4 Z" fill="#9ccbe4"/>
<path d="M673.5 353.3 L668.2 347.9 H671 V342.8 H676 V347.9 H678.8 Z" fill="#9ccbe4"/>
<rect x="687.2" y="342.2" width="8.4" height="2.2" fill="#c2c2c2"/><path d="M689.2 344.4 V351.4 H692 M689.2 347.6 H692" stroke="#c2c2c2" stroke-width="0.9" fill="none"/><rect x="692.4" y="346.4" width="7.6" height="2.4" fill="#d0d0d0"/><path d="M693.4 348 L699.8 354 M699.8 348 L693.4 354" stroke="#e8b8b0" stroke-width="1.2"/>
<path d="M707 342.8 H719.2 L714.6 348.8 V353.8 H711.6 V348.8 Z" fill="#0a93dc"/>
<use href="#mag" x="726.2" y="341.8" width="14" height="13"/>
<use href="#pg" x="608" y="360.7" width="8.6" height="11.6"/>
</svg>
<svg width="890" height="482" viewBox="0 0 890 482">
<use href="#pin" x="577.5" y="325.2" width="7" height="7"/><use href="#cx" x="590" y="325.2" width="7" height="7"/>
<use href="#ev" x="223" y="367" width="13" height="13"/>
<use href="#ev" x="223" y="382.4" width="13" height="13"/>
<use href="#ev" x="223" y="397.7" width="13" height="13"/>
</svg>
<!-- window borders -->
<div class="a" style="left:42.2px;top:68px;width:1px;height:410.4px;background:#c2c2c2"></div>
<div class="a" style="left:42.2px;top:477.4px;width:844.3px;height:1px;background:#c4c4c4"></div>
<div class="a" style="left:885.6px;top:68px;width:1px;height:410.4px;background:#c8c8c8"></div>
<!-- ANNOT -->
<svg width="890" height="482" viewBox="0 0 890 482">
<!-- dashed drag box -->
<path d="M89.2 264 V288.2 H106 M89.2 263.2 H114.3 V279" fill="none" stroke="#5a5a5a" stroke-width="1.7" stroke-dasharray="4.6 2.4"/>
<path d="M83.4 274 L95 274 C97.5 270.5 101.4 266 101.4 262 L101.4 252.6 C101.4 249.6 96.8 249.6 96.6 252.6 L96.4 258 L96.2 247.6 C96.2 244.6 91.2 244.6 91 247.6 L90.8 257 L90.7 246.4 C90.7 243.4 85.4 243.4 85.2 246.4 L85 257 L84.9 247.8 C84.9 244.8 80 244.8 79.9 247.8 L79.9 262.4 L77.2 258 C75.6 255.6 72.4 257.4 74 260.6 Z" fill="#f2f2f2" stroke="#555" stroke-width="1.7" stroke-linejoin="round"/>
<!-- pink highlight around Rectangle + arrow -->
<rect x="117.3" y="220.5" width="66.7" height="55.1" fill="none" stroke="#ee217b" stroke-width="2"/>
<path d="M184.4 219.9 L337 179.9" stroke="#ee217b" stroke-width="1.7" fill="none"/>
<path d="M343.6 178.4 L334.6 172.6 L338.4 186.6 Z" fill="#ee217b"/>
<g transform="translate(7.5,102.1)" stroke-linejoin="round"><path d="M-7.4 -5 C-4 -3.2 -1 -3.4 2 -5 C6 -6.8 11.4 -5.6 12.6 0" fill="none" stroke="#636363" stroke-width="1.6"/><rect x="0" y="0" width="25.8" height="44.3" rx="5.6" fill="#fff" stroke="#636363" stroke-width="1.8"/><path d="M1.6 13.6 V6 Q1.6 1.6 6 1.6 H12.6 V13.6 Z" fill="#0a93dc" stroke="none"/><path d="M12.6 0 V13.6" stroke="#636363" stroke-width="1.6"/><rect x="7.1" y="6.9" width="25.8" height="44.3" rx="5.6" fill="#fff" stroke="#636363" stroke-width="1.8"/><path d="M8.7 20.4 V12.9 Q8.7 8.5 13.1 8.5 H19.7 V20.4 Z" fill="#0a93dc" stroke="none"/><path d="M19.7 6.9 V20.4" stroke="#636363" stroke-width="1.6"/></g>
<rect x="30.7" y="136.8" width="18.4" height="18" fill="#ee217b"/><text x="39.6" y="150.9" text-anchor="middle" font-family="Liberation Sans, sans-serif" font-size="14" fill="#fff" style="transform-box:fill-box;transform-origin:center;transform:scaleX(1.0)">1</text>
<g transform="translate(171.8,349)" stroke-linejoin="round"><path d="M-7.4 -5 C-4 -3.2 -1 -3.4 2 -5 C6 -6.8 11.4 -5.6 12.6 0" fill="none" stroke="#636363" stroke-width="1.6"/><rect x="0" y="0" width="25.8" height="44.3" rx="5.6" fill="#fff" stroke="#636363" stroke-width="1.8"/><path d="M1.6 13.6 V6 Q1.6 1.6 6 1.6 H12.6 V13.6 Z" fill="#0a93dc" stroke="none"/><path d="M12.6 0 V13.6" stroke="#636363" stroke-width="1.6"/><rect x="7.1" y="6.9" width="25.8" height="44.3" rx="5.6" fill="#fff" stroke="#636363" stroke-width="1.8"/><path d="M8.7 20.4 V12.9 Q8.7 8.5 13.1 8.5 H19.7 V20.4 Z" fill="#0a93dc" stroke="none"/><path d="M19.7 6.9 V20.4" stroke="#636363" stroke-width="1.6"/></g>
<rect x="194.7" y="384" width="18.7" height="18.2" fill="#ee217b"/><text x="204.0" y="398.2" text-anchor="middle" font-family="Liberation Sans, sans-serif" font-size="14" fill="#fff" style="transform-box:fill-box;transform-origin:center;transform:scaleX(1.2)">4</text>
<g stroke-linejoin="round"><path d="M565.6 99.8 C570 101.8 573 100.4 577.6 99.4 C581.6 98.8 583.4 101.6 584.2 104.4" fill="none" stroke="#636363" stroke-width="1.8"/>
<rect x="562.2" y="105.3" width="44" height="24.9" fill="#fff" stroke="#636363" stroke-width="2"/>
<rect x="566.4" y="108" width="35.2" height="20.1" fill="#8c8c8c"/><rect x="567.9" y="109.0" width="3.2" height="3.2" fill="#fff"/><rect x="572.8" y="109.0" width="3.2" height="3.2" fill="#fff"/><rect x="577.7" y="109.0" width="3.2" height="3.2" fill="#fff"/><rect x="582.5" y="109.0" width="3.2" height="3.2" fill="#fff"/><rect x="587.1" y="109.0" width="3.2" height="3.2" fill="#fff"/><rect x="591.9" y="109.0" width="3.2" height="3.2" fill="#fff"/><rect x="596.9" y="109.0" width="3.5" height="3.2" fill="#fff"/><rect x="567.9" y="113.9" width="5.9" height="3.1" fill="#fff"/><rect x="575.5" y="113.9" width="3.0" height="3.1" fill="#fff"/><rect x="580.4" y="113.9" width="2.9" height="3.1" fill="#fff"/><rect x="585.2" y="113.9" width="2.8" height="3.1" fill="#fff"/><rect x="589.7" y="113.9" width="3.0" height="3.1" fill="#fff"/><rect x="594.5" y="113.9" width="5.8" height="3.1" fill="#fff"/><rect x="567.9" y="118.8" width="3.2" height="3.2" fill="#fff"/><rect x="572.8" y="118.8" width="3.2" height="3.2" fill="#fff"/><rect x="577.7" y="118.8" width="3.2" height="3.2" fill="#fff"/><rect x="582.5" y="118.8" width="3.2" height="3.2" fill="#fff"/><rect x="587.1" y="118.8" width="3.2" height="3.2" fill="#fff"/><rect x="591.9" y="118.8" width="3.2" height="3.2" fill="#fff"/><rect x="596.9" y="118.8" width="3.5" height="3.2" fill="#fff"/><rect x="567.9" y="123.5" width="3.2" height="3.2" fill="#fff"/><rect x="573.1" y="123.5" width="22.0" height="3.2" fill="#fff"/><rect x="596.9" y="123.5" width="3.5" height="3.2" fill="#fff"/></g>
<rect x="596.5" y="120.6" width="18.4" height="18" fill="#ee217b"/><text x="605.7" y="134.7" text-anchor="middle" font-family="Liberation Sans, sans-serif" font-size="14" fill="#fff" style="transform-box:fill-box;transform-origin:center;transform:scaleX(1.2)">3</text>
<rect x="104.8" y="278.8" width="18.2" height="18.2" fill="#ee217b"/><text x="113.9" y="293.0" text-anchor="middle" font-family="Liberation Sans, sans-serif" font-size="14" fill="#fff" style="transform-box:fill-box;transform-origin:center;transform:scaleX(1.2)">2</text>
</svg>
</body>
</html>
